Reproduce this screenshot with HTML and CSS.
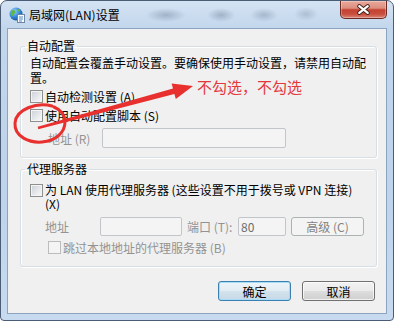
FILE: index.html
```html
<!DOCTYPE html>
<html lang="zh-CN">
<head>
    <meta charset="UTF-8">
    <title>局域网(LAN)设置</title>
    <link rel="stylesheet" href="styles.css">
</head>
<body>
    <div class="window">
        <div class="titlebar">
            <svg class="app-icon" viewBox="0 0 16 16">
                <defs>
                    <radialGradient id="globe" cx="35%" cy="30%" r="75%">
                        <stop offset="0" stop-color="#9fd3ff"/>
                        <stop offset="0.6" stop-color="#2f86d6"/>
                        <stop offset="1" stop-color="#1a4f96"/>
                    </radialGradient>
                </defs>
                <circle cx="7" cy="7" r="6.5" fill="url(#globe)"/>
                <path d="M3 3.5 C4.5 2.5 6 3 6.5 4.5 C7 6 5 6.5 4.5 8 C4 9.5 2.5 9 1.8 7.5 C1.5 6 2 4.5 3 3.5 Z" fill="#5fb845"/>
                <path d="M8.5 2 C10 1.8 11.5 3 11 4.2 C10.2 5 9 4.5 8.5 3.5 Z" fill="#5fb845"/>
                <rect x="8.5" y="7.5" width="7" height="8" fill="#fbfcfd" stroke="#6c86a6"/>
                <path d="M10 10h4M10 12h4M10 14h3" stroke="#4f86c6" stroke-width="1"/>
            </svg>
            <span class="title">局域网(LAN)设置</span>
            <button class="close">
                <svg viewBox="0 0 47 18">
                    <path d="M19 5.5l9 7M28 5.5l-9 7" stroke="#43201a" stroke-width="4.4" stroke-linecap="round"/>
                    <path d="M19 5.5l9 7M28 5.5l-9 7" stroke="#fff" stroke-width="2.4" stroke-linecap="round"/>
                </svg>
            </button>
        </div>

        <div class="client">
            <fieldset class="group">
                <legend>自动配置</legend>
                <p class="desc">自动配置会覆盖手动设置。要确保使用手动设置，请禁用自动配</p>
                <p class="desc">置。</p>
                <label class="check-row first"><input type="checkbox"> 自动检测设置 (A)</label>
                <label class="check-row"><input type="checkbox"> 使用自动配置脚本 (S)</label>
                <div class="field-row script-row disabled">
                    <span class="field-label">地址 (R)</span>
                    <input type="text" class="text-box script-addr" disabled>
                </div>
            </fieldset>

            <fieldset class="group proxy">
                <legend>代理服务器</legend>
                <label class="check-row proxy-check">
                    <input type="checkbox">
                    <span class="proxy-text">
                        <span class="line">为 LAN 使用代理服务器 (这些设置不用于拨号或 VPN 连接)</span>
                        <span class="line">(X)</span>
                    </span>
                </label>
                <div class="field-row proxy-row disabled">
                    <span class="field-label">地址</span>
                    <input type="text" class="text-box proxy-addr" disabled>
                    <span class="port-label">端口 (T):</span>
                    <input type="text" class="text-box port" value="80" disabled>
                    <button class="btn advanced" disabled>高级 (C)</button>
                </div>
                <label class="check-row bypass disabled"><input type="checkbox" disabled> 跳过本地地址的代理服务器 (B)</label>
            </fieldset>

            <div class="actions">
                <button class="btn default">确定</button>
                <button class="btn">取消</button>
            </div>
        </div>

        <!-- red markup drawn over the dialog -->
        <svg class="markup" viewBox="0 0 394 321">
            <path d="M52 106 C37 102 16 109 15 123 C14 137 30 143 42 142 C56 141 65 132 65 122 C65 115 61 110 54 107" fill="none" stroke="#e8302e" stroke-width="3" stroke-linecap="round"/>
            <polygon points="37.7,126.8 173,88.5 171.6,83.5 193,86 175.8,98.9 174.4,93.9 38.3,129.2" fill="#e8302e"/>
        </svg>
        <div class="note">不勾选，不勾选</div>
    </div>
</body>
</html>
```

FILE: styles.css
```css
* {
    box-sizing: border-box;
}

body {
    margin: 0;
    background-color: #ffffff;
    font-family: "Noto Sans CJK SC", "Liberation Sans", sans-serif;
    font-size: 12px;
    color: #000000;
    text-spacing-trim: space-all;
}

.window {
    position: relative;
    width: 394px;
    height: 321px;
    border: 1px solid #4a5d74;
    border-radius: 7px 7px 4px 4px;
    display: flex;
    flex-direction: column;
    overflow: hidden;
    background:
        radial-gradient(ellipse 20px 7px at 165px 14px, rgba(80, 100, 125, 0.35), transparent),
        radial-gradient(ellipse 14px 7px at 220px 14px, rgba(80, 100, 125, 0.35), transparent),
        radial-gradient(ellipse 14px 7px at 263px 14px, rgba(80, 100, 125, 0.3), transparent),
        radial-gradient(ellipse 12px 7px at 305px 13px, rgba(80, 100, 125, 0.25), transparent),
        linear-gradient(#d4e3f3, #c2d6ec 28px, #bed4ec 60%, #c7daef);
}

/* Title bar */
.titlebar {
    height: 27px;
    display: flex;
    align-items: flex-start;
}

.app-icon {
    width: 16px;
    height: 16px;
    margin: 6px 0 0 8px;
}

.title {
    margin: 6px 0 0 4px;
    line-height: 16px;
    font-size: 12px;
}

.close {
    margin-left: auto;
    margin-right: 6px;
    width: 47px;
    height: 18px;
    padding: 0;
    border: 1px solid #6b2b23;
    border-top: none;
    border-radius: 0 0 5px 5px;
    background: linear-gradient(#e9a99b 0%, #dc8e7f 42%, #c4412f 52%, #c9503e 78%, #dc8676 100%);
    box-shadow: inset 0 0 0 1px rgba(255, 255, 255, 0.3);
}

.close svg {
    display: block;
    width: 45px;
    height: 17px;
}

/* Client area */
.client {
    flex: 1;
    margin: 0 6px 6px 6px;
    border: 1px solid #8da4c0;
    background-color: #f0f0f0;
    padding: 10px 9px 0 12px;
}

.group {
    margin: 0;
    padding: 2px 4px 9px 9px;
    min-width: 0;
    border: 1px solid #d5dfe5;
    border-radius: 3px;
    box-shadow: inset 1px 1px 0 #ffffff, 1px 1px 0 #ffffff;
}

.group legend {
    padding: 0 2px;
    margin-left: -5px;
    line-height: 14px;
}

.desc {
    margin: 0;
    height: 15px;
    line-height: 15px;
    white-space: nowrap;
}

.check-row {
    display: flex;
    align-items: center;
    height: 19px;
    gap: 2px;
    white-space: nowrap;
}

.check-row.first {
    margin-top: 2px;
}

input[type="checkbox"] {
    appearance: none;
    margin: 0;
    width: 13px;
    height: 13px;
    flex: none;
    border: 1px solid #8e8f8f;
    background: linear-gradient(135deg, #cbcfd5 0%, #eceef0 70%, #f8f8f8 100%);
    box-shadow: inset 0 0 0 1px #f4f4f4;
}

input[type="checkbox"]:disabled {
    border-color: #bcbcbc;
    background: #f4f4f4;
    box-shadow: none;
}

.disabled {
    color: #939393;
}

.field-row {
    display: flex;
    align-items: center;
    white-space: nowrap;
}

.field-label {
    flex: none;
}

.text-box {
    margin: 0;
    padding: 0 2px;
    height: 20px;
    border: 1px solid #c2c5ca;
    border-radius: 2px;
    background-color: #f4f4f4;
    font: 12px "Noto Sans CJK SC", "Liberation Sans", sans-serif;
    color: #6d6d6d;
}

.script-row {
    margin-top: 3px;
    padding-left: 18px;
}

.script-row .field-label {
    width: 54px;
}

.script-addr {
    width: 184px;
}

/* Proxy group */
.proxy {
    margin-top: 4px;
}

.proxy-check {
    height: auto;
    align-items: flex-start;
    margin-top: 5px;
}

.proxy-check input {
    margin-top: 1px;
}

.proxy-text .line {
    display: block;
    height: 14px;
    line-height: 14px;
}

.proxy-row {
    margin-top: 6px;
    padding-left: 15px;
}

.proxy-row .field-label {
    width: 55px;
}

.proxy-row .text-box {
    height: 19px;
}

.proxy-addr {
    width: 82px;
}

.port-label {
    width: 51px;
    margin-left: 5px;
}

.port {
    width: 48px;
}

.bypass {
    margin-top: 2px;
    padding-left: 18px;
}

/* Buttons */
.btn {
    width: 73px;
    height: 20px;
    padding: 0;
    border: 1px solid #707070;
    border-radius: 3px;
    background: linear-gradient(#f2f2f2 0%, #ebebeb 48%, #dddddd 52%, #cfcfcf 100%);
    box-shadow: inset 0 0 0 1px rgba(255, 255, 255, 0.7);
    font: 12px "Noto Sans CJK SC", "Liberation Sans", sans-serif;
    color: #000000;
}

.btn.default {
    border-color: #3c7fb1;
    background: linear-gradient(#edf5fa 0%, #e2ecf3 48%, #d3e2ec 52%, #c6d9e6 100%);
    box-shadow: inset 0 0 0 1px #a6dcf6;
}

.btn.advanced {
    margin-left: 5px;
    height: 19px;
    border-color: #adb2b5;
    background: #f4f4f4;
    box-shadow: none;
    color: #838383;
}

.actions {
    display: flex;
    justify-content: flex-end;
    gap: 11px;
    margin: 14px 2px 0 0;
}

/* Red annotation on top */
.markup {
    position: absolute;
    top: -1px;
    left: -1px;
    width: 394px;
    height: 321px;
    pointer-events: none;
}

.note {
    position: absolute;
    top: 77px;
    left: 196px;
    font-size: 15px;
    line-height: 17px;
    color: #e4393c;
    white-space: nowrap;
}
```
